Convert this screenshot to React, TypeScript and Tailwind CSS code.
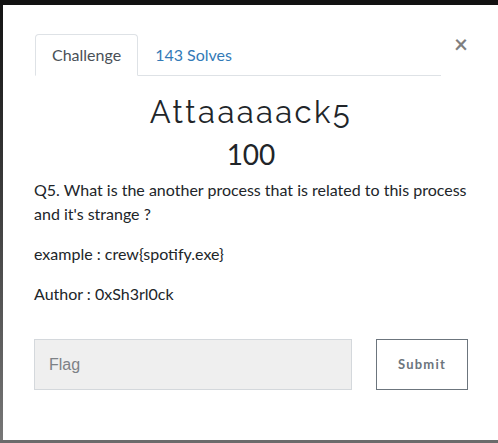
import React, { useState } from 'react';

const App: React.FC = () => {
    const [flag, setFlag] = useState('');
    const [tab, setTab] = useState<'challenge' | 'solves'>('challenge');

    return (
        <div className="w-[498px] h-[443px] overflow-hidden bg-[#6b6b6b] flex flex-col">
            {/* dimmed page behind the modal */}
            <div className="h-[5px] shrink-0 bg-[#121212]" />
            <div className="flex flex-1 min-h-0">
                <div className="w-[3px] shrink-0 bg-gradient-to-b from-[#141414] to-[#777777]" />
                <div className="flex-1 bg-white flex flex-col pt-[29px] px-[31px] font-['Lato','Liberation_Sans',sans-serif] text-[#212529]">
                    <div className="flex items-start">
                        <ul className="flex flex-1 ml-[1px] border-b border-[#dee2e6] mr-[13px]">
                            <li className="-mb-px">
                                <button
                                    onClick={() => setTab('challenge')}
                                    className={`block px-[16px] py-[8px] text-[16px] leading-[24px] rounded-t-[4px] border ${tab === 'challenge' ? 'border-[#dee2e6] border-b-white bg-white text-[#495057]' : 'border-transparent text-[#337ab7]'}`}
                                >
                                    Challenge
                                </button>
                            </li>
                            <li className="-mb-px">
                                <button
                                    onClick={() => setTab('solves')}
                                    className={`block px-[16px] py-[8px] text-[16px] leading-[24px] rounded-t-[4px] border ${tab === 'solves' ? 'border-[#dee2e6] border-b-white bg-white text-[#495057]' : 'border-transparent text-[#337ab7]'}`}
                                >
                                    143 Solves
                                </button>
                            </li>
                        </ul>
                        <button className="mt-[-2px] text-[24px] leading-[24px] font-bold text-black/50">×</button>
                    </div>

                    <h2 className="mt-[18px] text-center text-[31px] leading-[36px] tracking-[2.4px] font-['Raleway','Lato','Liberation_Sans',sans-serif] font-normal">
                        Attaaaaack5
                    </h2>
                    <h3 className="mt-[7px] text-center text-[28px] leading-[34px] font-normal">100</h3>

                    <div className="mt-[7px] text-[16px] leading-[24px]">
                        <p className="mb-[16px]">Q5. What is the another process that is related to this process and it's strange ?</p>
                        <p className="mb-[16px]">example : crew{'{'}spotify.exe{'}'}</p>
                        <p>Author : 0xSh3rl0ck</p>
                    </div>

                    <div className="mt-[33px] flex gap-[24px]">
                        <input
                            value={flag}
                            onChange={e => setFlag(e.target.value)}
                            placeholder="Flag"
                            className="w-[318px] h-[51px] px-[14px] bg-[#efefef] border border-[#d4d8dc] text-[16px] font-['Liberation_Sans',sans-serif] text-[#495057] placeholder:text-[#7d8186] outline-none"
                        />
                        <button className="w-[92px] h-[51px] border border-[#6c757d] bg-white text-[13px] font-bold tracking-[1.2px] text-[#6c757d]">
                            Submit
                        </button>
                    </div>
                </div>
            </div>
            <div className="h-[3px] shrink-0 bg-[#6b6b6b]" />
        </div>
    );
};

export default App;
